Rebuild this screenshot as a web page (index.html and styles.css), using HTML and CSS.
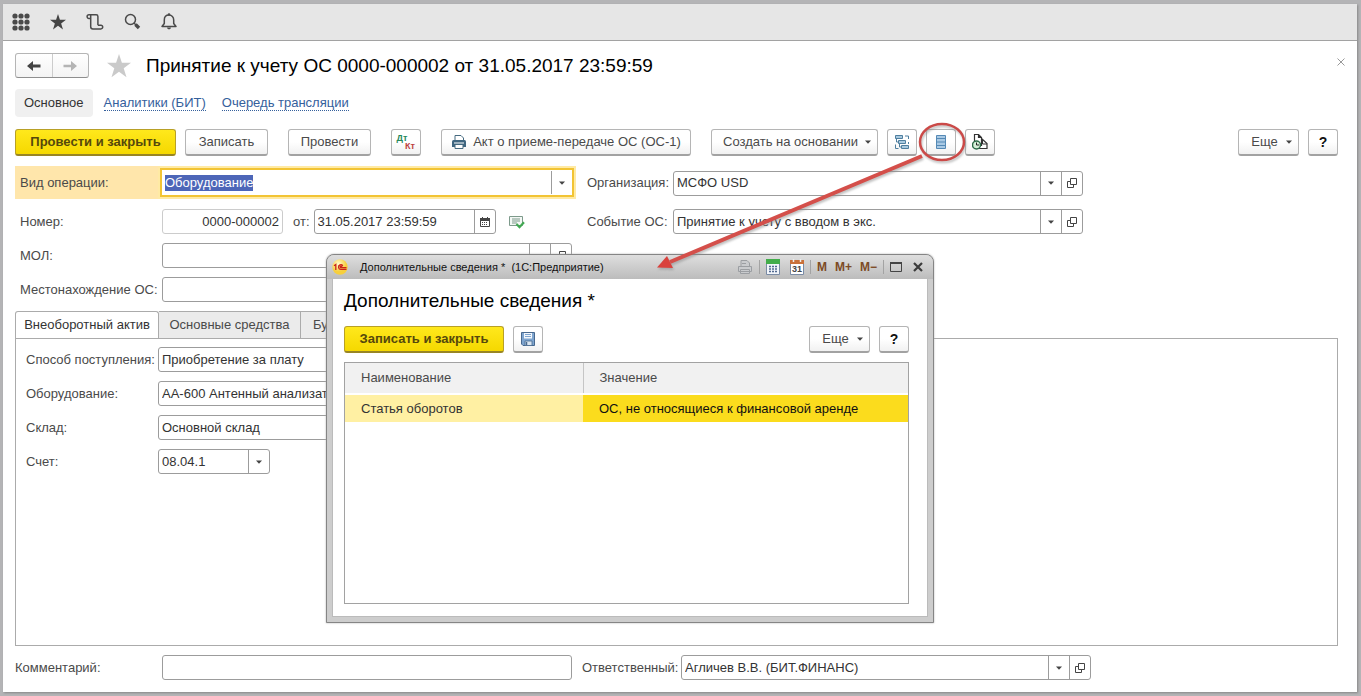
FILE: index.html
```html
<!DOCTYPE html>
<html lang="ru">
<head>
<meta charset="utf-8">
<title>Принятие к учету ОС</title>
<link rel="stylesheet" href="styles.css">
</head>
<body>
<svg class="defs" aria-hidden="true">
  <symbol id="i-down" viewBox="0 0 8 8"><path d="M1 2.500h6L4 5.800z" fill="#444"/></symbol>
  <symbol id="i-open" viewBox="0 0 12 12"><path d="M4.500 1.500h6v6h-6zM4.500 4.500h-3v6h6v-3" fill="none" stroke="#444"/></symbol>
  <symbol id="i-star" viewBox="0 0 24 24"><path d="M12 0l2.900 8.700H24l-7.300 5.500 2.800 9L12 17.700l-7.500 5.500 2.800-9L0 8.700h9.100z" fill="currentColor"/></symbol>
</svg>
<div class="window">
  <header class="topbar">
    <button class="tool" aria-label="Меню"><svg width="18" height="18" viewBox="0 0 18 18" fill="#4a4a4a"><circle cx="3" cy="3" r="2.600"/><circle cx="9" cy="3" r="2.600"/><circle cx="15" cy="3" r="2.600"/><circle cx="3" cy="9" r="2.600"/><circle cx="9" cy="9" r="2.600"/><circle cx="15" cy="9" r="2.600"/><circle cx="3" cy="15" r="2.600"/><circle cx="9" cy="15" r="2.600"/><circle cx="15" cy="15" r="2.600"/></svg></button>
    <button class="tool" aria-label="Избранное"><svg class="dark" width="16" height="16"><use href="#i-star"/></svg></button>
    <button class="tool" aria-label="История"><svg width="18" height="18" viewBox="0 0 18 18" fill="none" stroke="#4a4a4a" stroke-width="1.500"><path d="M4.500 5.500H3a1.800 1.800 0 1 1 0-3.800h7.200a1.700 1.700 0 0 1 1.700 1.700v8.800M4.700 2v11.700a2.200 2.200 0 0 0 2.200 2.200h8a1.800 1.800 0 0 0 1.800-1.900 1.700 1.700 0 0 0-1.700-1.700h-3"/></svg></button>
    <button class="tool" aria-label="Поиск"><svg width="18" height="18" viewBox="0 0 18 18" fill="none" stroke="#4a4a4a"><circle cx="7.500" cy="6.500" r="5" stroke-width="1.500"/><path d="M11 10l2 2" stroke-width="1.500"/><path d="M12.500 11.500l3.500 3.500" stroke-width="3.400"/></svg></button>
    <button class="tool" aria-label="Уведомления"><svg width="18" height="18" viewBox="0 0 18 18"><path d="M2 13.500h14l-2.300-3V7c0-3-1.900-4.900-4.700-4.900S4.300 4 4.300 7v3.500z" fill="none" stroke="#4a4a4a" stroke-width="1.500" stroke-linejoin="round"/><path d="M7 14.500h4c0 2.400-4 2.400-4 0z" fill="#4a4a4a"/><circle cx="9" cy="1.500" r="1.300" fill="#4a4a4a"/></svg></button>
  </header>

  <main class="content">
    <div class="heading">
      <div class="history">
        <button aria-label="Назад"><svg width="16" height="12" viewBox="0 0 16 12"><path d="M1 6l6-5v3.500h7.500v3H7V11z" fill="#444"/></svg></button>
        <button aria-label="Вперед"><svg width="16" height="12" viewBox="0 0 16 12"><path d="M15 6L9 1v3.700H1.500v2.600H9V11z" fill="#b4b4b4"/></svg></button>
      </div>
      <button class="fav" aria-label="В избранное"><svg width="24" height="24"><use href="#i-star"/></svg></button>
      <h1>Принятие к учету ОС 0000-000002 от 31.05.2017 23:59:59</h1>
      <button class="close" aria-label="Закрыть"><svg width="8" height="8" viewBox="0 0 8 8"><path d="M.5.5l7 7m0-7l-7 7" stroke="#999"/></svg></button>
    </div>

    <nav class="sections">
      <a class="current" href="#">Основное</a>
      <a href="#"><span>Аналитики (БИТ)</span></a>
      <a href="#"><span>Очередь трансляции</span></a>
    </nav>

    <div class="commands">
      <button class="btn primary post">Провести и закрыть</button>
      <button class="btn spaced short">Записать</button>
      <button class="btn spaced short">Провести</button>
      <button class="btn icon spaced dtkt" aria-label="Проводки"><span class="dt">Дт</span><span class="kt">Кт</span></button>
      <button class="btn spaced act"><svg width="16" height="16" viewBox="0 0 16 16"><path d="M4 7V1.500h6l2.500 2.500v3" fill="#fff" stroke="#466a80"/><path d="M1 7.500Q1 6 2.500 6h11Q15 6 15 7.500V13H1z" fill="#3f6680"/><path d="M3 9h10" stroke="#fff"/><path d="M4 10.500h8v4H4z" fill="#fff" stroke="#466a80"/></svg><span>Акт о приеме-передаче ОС (ОС-1)</span></button>
      <button class="btn create"><span>Создать на основании</span><svg width="8" height="8"><use href="#i-down"/></svg></button>
      <button class="btn icon" aria-label="Структура подчиненности"><svg width="16" height="16" viewBox="0 0 16 16" fill="#a9c9df" stroke="#4f7f9f"><path d="M1.500 1.500h7v3h-7zM4.500 6.500h7v3h-7zM7.500 11.500h7v3h-7z"/><path d="M2.500 4.500v3.500h2M5.500 9.500V13h2M11 2h3.500v3M14.500 8v2M1.500 10.500v4h3" fill="none"/></svg></button>
      <button class="btn icon" aria-label="Дополнительные сведения"><svg width="12" height="16" viewBox="0 0 12 16"><path d="M1.500 1.500h9v13h-9z" fill="#a9c9e4" stroke="#5589b5"/><path d="M1 4.500h10M1 8h10M1 11.500h10" stroke="#5589b5"/></svg></button>
      <button class="btn icon" aria-label="Отложенные"><svg width="16" height="16" viewBox="0 0 16 16"><path d="M2.500 8V.5h4l3 3V12M6.500.5v3h3M9.500 4.500l5.500 5v5H6" fill="#fff" stroke="#333" stroke-width="1.200"/><path d="M10.500 6v4H15" fill="none" stroke="#333"/><circle cx="4.500" cy="11" r="4" fill="#d5efd8" stroke="#2c6b48" stroke-width="1.500"/><path d="M4.500 8.500V11H7" fill="none" stroke="#222"/></svg></button>
      <span class="grow"></span>
      <button class="btn more"><span>Еще</span><svg width="8" height="8"><use href="#i-down"/></svg></button>
      <button class="btn icon help">?</button>
    </div>

    <div class="form">
      <div class="row active">
        <label for="op">Вид операции:</label>
        <div class="field focus"><input id="op" value="Оборудование"><button aria-label="Выбрать"><svg width="8" height="8"><use href="#i-down"/></svg></button></div>
      </div>
      <div class="row side">
        <label for="org">Организация:</label>
        <div class="field"><input id="org" value="МСФО USD"><button aria-label="Выбрать"><svg width="8" height="8"><use href="#i-down"/></svg></button><button aria-label="Открыть"><svg width="12" height="12"><use href="#i-open"/></svg></button></div>
      </div>
      <div class="row">
        <label for="num">Номер:</label>
        <div class="field number"><input id="num" value="0000-000002"></div>
        <label class="from" for="date">от:</label>
        <div class="field date"><input id="date" value="31.05.2017 23:59:59"><button aria-label="Календарь"><svg width="10" height="10" viewBox="0 0 10 10"><path d="M.5 2h9v7.500h-9z" fill="#fff" stroke="#444"/><path d="M0 1h10v3H0zM2 0h1v2H2zM7 0h1v2H7z" fill="#444"/><path d="M2 5.500h6M2 7.500h6" stroke="#444" stroke-dasharray="1 1"/></svg></button></div>
        <svg class="posted" width="16" height="14" viewBox="0 0 16 14"><path d="M.5 1.500h13v9H.5z" fill="#f4f8f5" stroke="#7d9a8b"/><path d="M3 4h8M3 6h8M3 8h5" stroke="#7d9a8b"/><path d="M7.500 9l3 3.200 4.500-5" fill="none" stroke="#42a852" stroke-width="2.200"/></svg>
      </div>
      <div class="row side">
        <label for="event">Событие ОС:</label>
        <div class="field"><input id="event" value="Принятие к учету с вводом в экс."><button aria-label="Выбрать"><svg width="8" height="8"><use href="#i-down"/></svg></button><button aria-label="Открыть"><svg width="12" height="12"><use href="#i-open"/></svg></button></div>
      </div>
      <div class="row lone">
        <label for="mol">МОЛ:</label>
        <div class="field"><input id="mol"><button aria-label="Выбрать"><svg width="8" height="8"><use href="#i-down"/></svg></button><button aria-label="Открыть"><svg width="12" height="12"><use href="#i-open"/></svg></button></div>
      </div>
      <div class="row lone">
        <label for="place">Местонахождение ОС:</label>
        <div class="field"><input id="place"><button aria-label="Выбрать"><svg width="8" height="8"><use href="#i-down"/></svg></button><button aria-label="Открыть"><svg width="12" height="12"><use href="#i-open"/></svg></button></div>
      </div>
    </div>

    <div class="tabs" role="tablist">
      <button class="tab on" role="tab" aria-selected="true">Внеоборотный актив</button>
      <button class="tab" role="tab">Основные средства</button>
      <button class="tab" role="tab">Бухгалтерский учет</button>
    </div>
    <section class="panel">
      <div class="row">
        <label for="way">Способ поступления:</label>
        <div class="field"><input id="way" value="Приобретение за плату"></div>
      </div>
      <div class="row">
        <label for="equip">Оборудование:</label>
        <div class="field"><input id="equip" value="АА-600 Антенный анализатор"></div>
      </div>
      <div class="row">
        <label for="store">Склад:</label>
        <div class="field"><input id="store" value="Основной склад"></div>
      </div>
      <div class="row">
        <label for="acc">Счет:</label>
        <div class="field account"><input id="acc" value="08.04.1"><button aria-label="Выбрать"><svg width="8" height="8"><use href="#i-down"/></svg></button></div>
      </div>
    </section>

    <footer class="footer">
      <label class="note" for="note">Комментарий:</label>
      <div class="field"><input id="note"></div>
      <label class="resp" for="resp">Ответственный:</label>
      <div class="field"><input id="resp" value="Агличев В.В. (БИТ.ФИНАНС)"><button aria-label="Выбрать"><svg width="8" height="8"><use href="#i-down"/></svg></button><button aria-label="Открыть"><svg width="12" height="12"><use href="#i-open"/></svg></button></div>
    </footer>
  </main>
</div>

<div class="dialog" role="dialog" aria-label="Дополнительные сведения">
  <div class="titlebar">
    <svg width="16" height="16" viewBox="0 0 16 16"><defs><radialGradient id="g1c" cx=".4" cy=".3"><stop offset="0" stop-color="#fffbd0"/><stop offset="1" stop-color="#f7cf3c"/></radialGradient></defs><circle cx="8" cy="8" r="7.700" fill="url(#g1c)"/><path d="M2 6.700l1.800-1.200V11M10.800 6.800a2.300 2.300 0 1 0-1.800 3.500h5.500M9.800 8a.8.800 0 1 0-.8.700h5.500" fill="none" stroke="#cc2418" stroke-width="1.300"/></svg>
    <span class="caption">Дополнительные сведения *&nbsp; (1С:Предприятие)</span>
    <button aria-label="Печать"><svg width="16" height="16" viewBox="0 0 16 16" fill="#c9cbce" stroke="#9b9ea2"><path d="M4 7V1.500h6L12.500 4v3M1.500 7.500h13v5h-13zM3.500 10.500h9v4h-9z"/><path d="M5 4.500h4M5 12.500h6"/></svg></button>
    <i class="sep"></i>
    <button aria-label="Калькулятор"><svg width="14" height="16" viewBox="0 0 14 16"><path d="M.5.5h13v15H.5z" fill="#f2f5fa" stroke="#7a8ba5"/><path d="M0 0h14v5H0z" fill="#43ad4b"/><path d="M3 7.500h8M3 10h8M3 12.500h8" stroke="#526a91" stroke-width="1.500" stroke-dasharray="2 1"/></svg></button>
    <button class="cal" aria-label="Календарь"><svg width="14" height="16" viewBox="0 0 14 16"><path d="M.5 1.500h13v14H.5z" fill="#fff" stroke="#7a8ba5"/><path d="M0 1h14v4H0z" fill="#c9713a"/><path d="M3.500 0v3M10.500 0v3" stroke="#eee" stroke-width="1.500"/><text x="7" y="13" text-anchor="middle" class="day">31</text></svg></button>
    <i class="sep"></i>
    <button class="mem">M</button><button class="mem">M+</button><button class="mem">M−</button>
    <i class="sep"></i>
    <button aria-label="Развернуть"><svg width="12" height="10" viewBox="0 0 12 10"><path d="M.5 1h11v8.500H.5z" fill="none" stroke="#444"/><path d="M0 1h12" stroke="#444" stroke-width="2"/></svg></button>
    <button class="x" aria-label="Закрыть"><svg width="10" height="10" viewBox="0 0 10 10"><path d="M1 1l8 8m0-8L1 9" stroke="#3c3c3c" stroke-width="2.200"/></svg></button>
  </div>
  <div class="dialog-body">
    <h2>Дополнительные сведения *</h2>
    <div class="commands">
      <button class="btn primary save">Записать и закрыть</button>
      <button class="btn icon" aria-label="Записать"><svg width="14" height="14" viewBox="0 0 14 14"><path d="M.5.5h13v13H2L.5 12z" fill="#7fa5cf" stroke="#48698f"/><path d="M3 1h8v5.500H3z" fill="#f3f7fb"/><path d="M4 2.500h6M4 4.500h6" stroke="#7fa5cf"/><path d="M4 9h7v4.500H4z" fill="#dbe6f1" stroke="#48698f" stroke-width=".8"/><path d="M5.500 10v3" stroke="#48698f" stroke-width="1.500"/></svg></button>
      <span class="grow"></span>
      <button class="btn more"><span>Еще</span><svg width="8" height="8"><use href="#i-down"/></svg></button>
      <button class="btn icon help">?</button>
    </div>
    <div class="grid">
      <table>
        <thead><tr><th>Наименование</th><th>Значение</th></tr></thead>
        <tbody><tr><td>Статья оборотов</td><td class="cell">ОС, не относящиеся к финансовой аренде</td></tr></tbody>
      </table>
    </div>
  </div>
</div>

<svg class="pointer" width="320" height="160" viewBox="0 0 320 160" aria-hidden="true">
  <ellipse cx="292" cy="22" rx="22" ry="18" fill="none" stroke="#cb4a48" stroke-width="2.500"/>
  <path d="M272 36L20 142" stroke="#d44f4a" stroke-width="4"/>
  <path d="M7 147.500L17 136l6 12z" fill="#d9413c"/>
</svg>
<script src="app.js"></script>
</body>
</html>
```
FILE: app.js
```js
const operation = document.getElementById('op');
operation.focus();
operation.select();
```
FILE: styles.css
```css
* { box-sizing: border-box; }
body {
  margin: 0;
  min-height: 100vh;
  padding: 4px 4px 4px 3px;
  display: flex;
  position: relative;
  background: #b4b4b6;
  font: 13px/16px "Liberation Sans", Arial, sans-serif;
  color: #4a4a4a;
}
button, input { font: inherit; color: inherit; margin: 0; padding: 0; }
button { border: 0; background: none; display: flex; align-items: center; justify-content: center; }
.defs { position: absolute; width: 0; height: 0; }
.window { flex: 1; display: flex; flex-direction: column; background: #fff; box-shadow: 1px 1px 2px #888; min-width: 0; }

.topbar { height: 37px; display: flex; align-items: center; gap: 19px; padding: 0 9px; background: #e6e6e6; border-bottom: 1px solid #a2a2a2; }
.tool { width: 18px; height: 18px; }
.dark { color: #444; }

.content { flex: 1; display: flex; flex-direction: column; padding: 12px 19px 12px 12px; }
.heading { display: flex; align-items: center; height: 25px; }
.history { display: flex; width: 74px; height: 25px; border: 1px solid #b5b5b5; border-bottom-color: #8e8e8e; border-radius: 3px; background: linear-gradient(#fff, #f3f3f3); }
.history button { flex: 1; }
.history button + button { border-left: 1px solid #ccc; }
.fav { margin-left: 18px; color: #cacaca; }
h1 { flex: 1; margin: 0 0 0 15px; font-size: 19px; line-height: 24px; font-weight: 400; color: #000; }
.close { margin: -8px -8px 0 0; padding: 1px; }

.sections { display: flex; align-items: center; gap: 16px; margin-top: 11px; height: 28px; }
.sections a { color: #35609c; text-decoration: none; }
.sections span { border-bottom: 1px dotted #35609c; }
.sections .current { margin-right: -5px; padding: 6px 9px; border-radius: 4px; background: #f0f0f0; color: #333; }

.commands { display: flex; gap: 9px; }
.content > .commands { margin-top: 12px; }
.btn { height: 27px; padding: 0 10px; gap: 6px; flex: none; border: 1px solid #b5b5b5; border-bottom: 2px solid #a2a2a2; border-radius: 3px; background: linear-gradient(#fff 50%, #f1f1f1); white-space: nowrap; }
.btn.primary { border-color: #b8a026 #b8a026 #988524; background: linear-gradient(#ffe81c, #f5d800); color: #55480c; font-weight: 700; }
.post { width: 161px; }
.save { width: 160px; }
.short { width: 83px; }
.act { width: 250px; padding: 0; }
.create { width: 167px; padding: 0 4px 0 10px; }
.btn.icon { width: 30px; padding: 0; }
.spaced { margin-right: 11px; }
.more { width: 61px; padding: 0 5px 0 12px; gap: 7px; }
.help { color: #111; font-weight: 700; font-size: 14px; }
.grow { flex: 1; }
.dtkt { flex-direction: column; gap: 0; font: 700 9px/8px "Liberation Sans", Arial, sans-serif; }
.dt { color: #26895a; margin-right: 8px; }
.kt { color: #bd3f3f; margin-left: 8px; }

.form { display: grid; grid-template-columns: 561px 1fr; column-gap: 11px; row-gap: 9px; margin-top: 10px; }
.row { display: flex; align-items: center; }
.form .row { padding-left: 5px; }
.form .row > label:first-child { width: 142px; white-space: nowrap; }
.form .side { padding-left: 0; }
.form .side > label:first-child { width: 86px; }
.lone { grid-column: 1 / -1; }
.form .active { height: 33px; margin-bottom: 1px; background: #ffe6ab; }
.form .active > label:first-child { width: 140px; }

.field { display: flex; width: 410px; height: 25px; border: 1px solid #9c9c9c; border-radius: 3px; background: #fff; overflow: hidden; }
.field input { flex: 1; min-width: 0; border: 0; outline: 0; background: none; padding: 0 3px; color: #333; }
.field button { width: 21px; flex: none; border-left: 1px solid #9c9c9c; }
.field.focus { width: 414px; height: 29px; border: 2px solid #f2c434; border-radius: 0; box-shadow: 0 0 0 2px #ffeaa5; }
.focus button { margin: 1px 0; }
.focus input::selection { background: #4d66b8; color: #fff; }
.field.number { width: 121px; border-color: #ccc; }
.number input { text-align: right; }
.from { margin: 0 4px 0 10px; }
.field.date { width: 182px; }
.posted { margin-left: 13px; }

.tabs { display: flex; margin-top: 9px; }
.tab { height: 28px; padding: 0 10px; margin-bottom: -1px; border: 1px solid #ababab; border-left: 0; background: #ebebeb; white-space: nowrap; }
.tab.on { width: 144px; border-left: 1px solid #ababab; border-bottom-color: #fff; border-radius: 3px 3px 0 0; background: #fff; color: #333; }
.tab + .tab { width: 142px; }
.panel { flex: 1; border: 1px solid #ababab; padding: 8px 10px; display: flex; flex-direction: column; gap: 9px; }
.panel label { width: 132px; white-space: nowrap; }
.field.account { width: 112px; }

.footer { display: flex; align-items: center; margin-top: 9px; }
.note { width: 147px; }
.resp { width: 99px; margin-left: 10px; }

.dialog { position: absolute; left: 326px; top: 254px; width: 608px; height: 369px; display: flex; flex-direction: column; padding: 0 5px 5px; border: 1px solid #858585; border-radius: 8px 8px 0 0; background: #cdcdcd; box-shadow: 0 0 2px #aaa; overflow: hidden; }
.titlebar { display: flex; align-items: center; height: 24px; flex: none; margin: 0 -5px; padding: 0 10px 0 5px; background: linear-gradient(#dedede, #bcbcbc); color: #111; font-size: 11px; }
.caption { flex: 1; margin-left: 12px; }
.sep { width: 1px; height: 14px; margin: 0 6px; background: #a3a3a3; }
.cal { margin-left: 10px; }
.day { font: 700 9px "Liberation Sans", Arial, sans-serif; fill: #444; }
.mem { color: #7c4a25; font-weight: 700; font-size: 12px; }
.mem + .mem { margin-left: 8px; }
.x { margin-left: 11px; }
.dialog-body { flex: 1; display: flex; flex-direction: column; padding: 11px 18px 12px 11px; border: 1px solid #bbb; border-top: 0; background: #fff; }
h2 { margin: 0 0 14px; font-size: 19px; line-height: 22px; font-weight: 400; color: #000; }
.grid { flex: 1; margin-top: 9px; border: 1px solid #a2a2a2; }
table { width: 100%; border-collapse: collapse; table-layout: fixed; }
th { height: 31px; padding: 0 16px; border-bottom: 1px solid #c5c5c5; background: #f1f1f1; font-weight: 400; text-align: left; }
th:first-child { width: 238px; border-right: 1px solid #c5c5c5; }
td { height: 28px; padding: 0 16px; border-top: 2px solid #fff; background: #fff0a3; color: #333; }
td.cell { background: #fbdc1d; color: #111; }

.pointer { position: absolute; left: 650px; top: 120px; pointer-events: none; filter: drop-shadow(1px 2px 1px #8888); }
```
